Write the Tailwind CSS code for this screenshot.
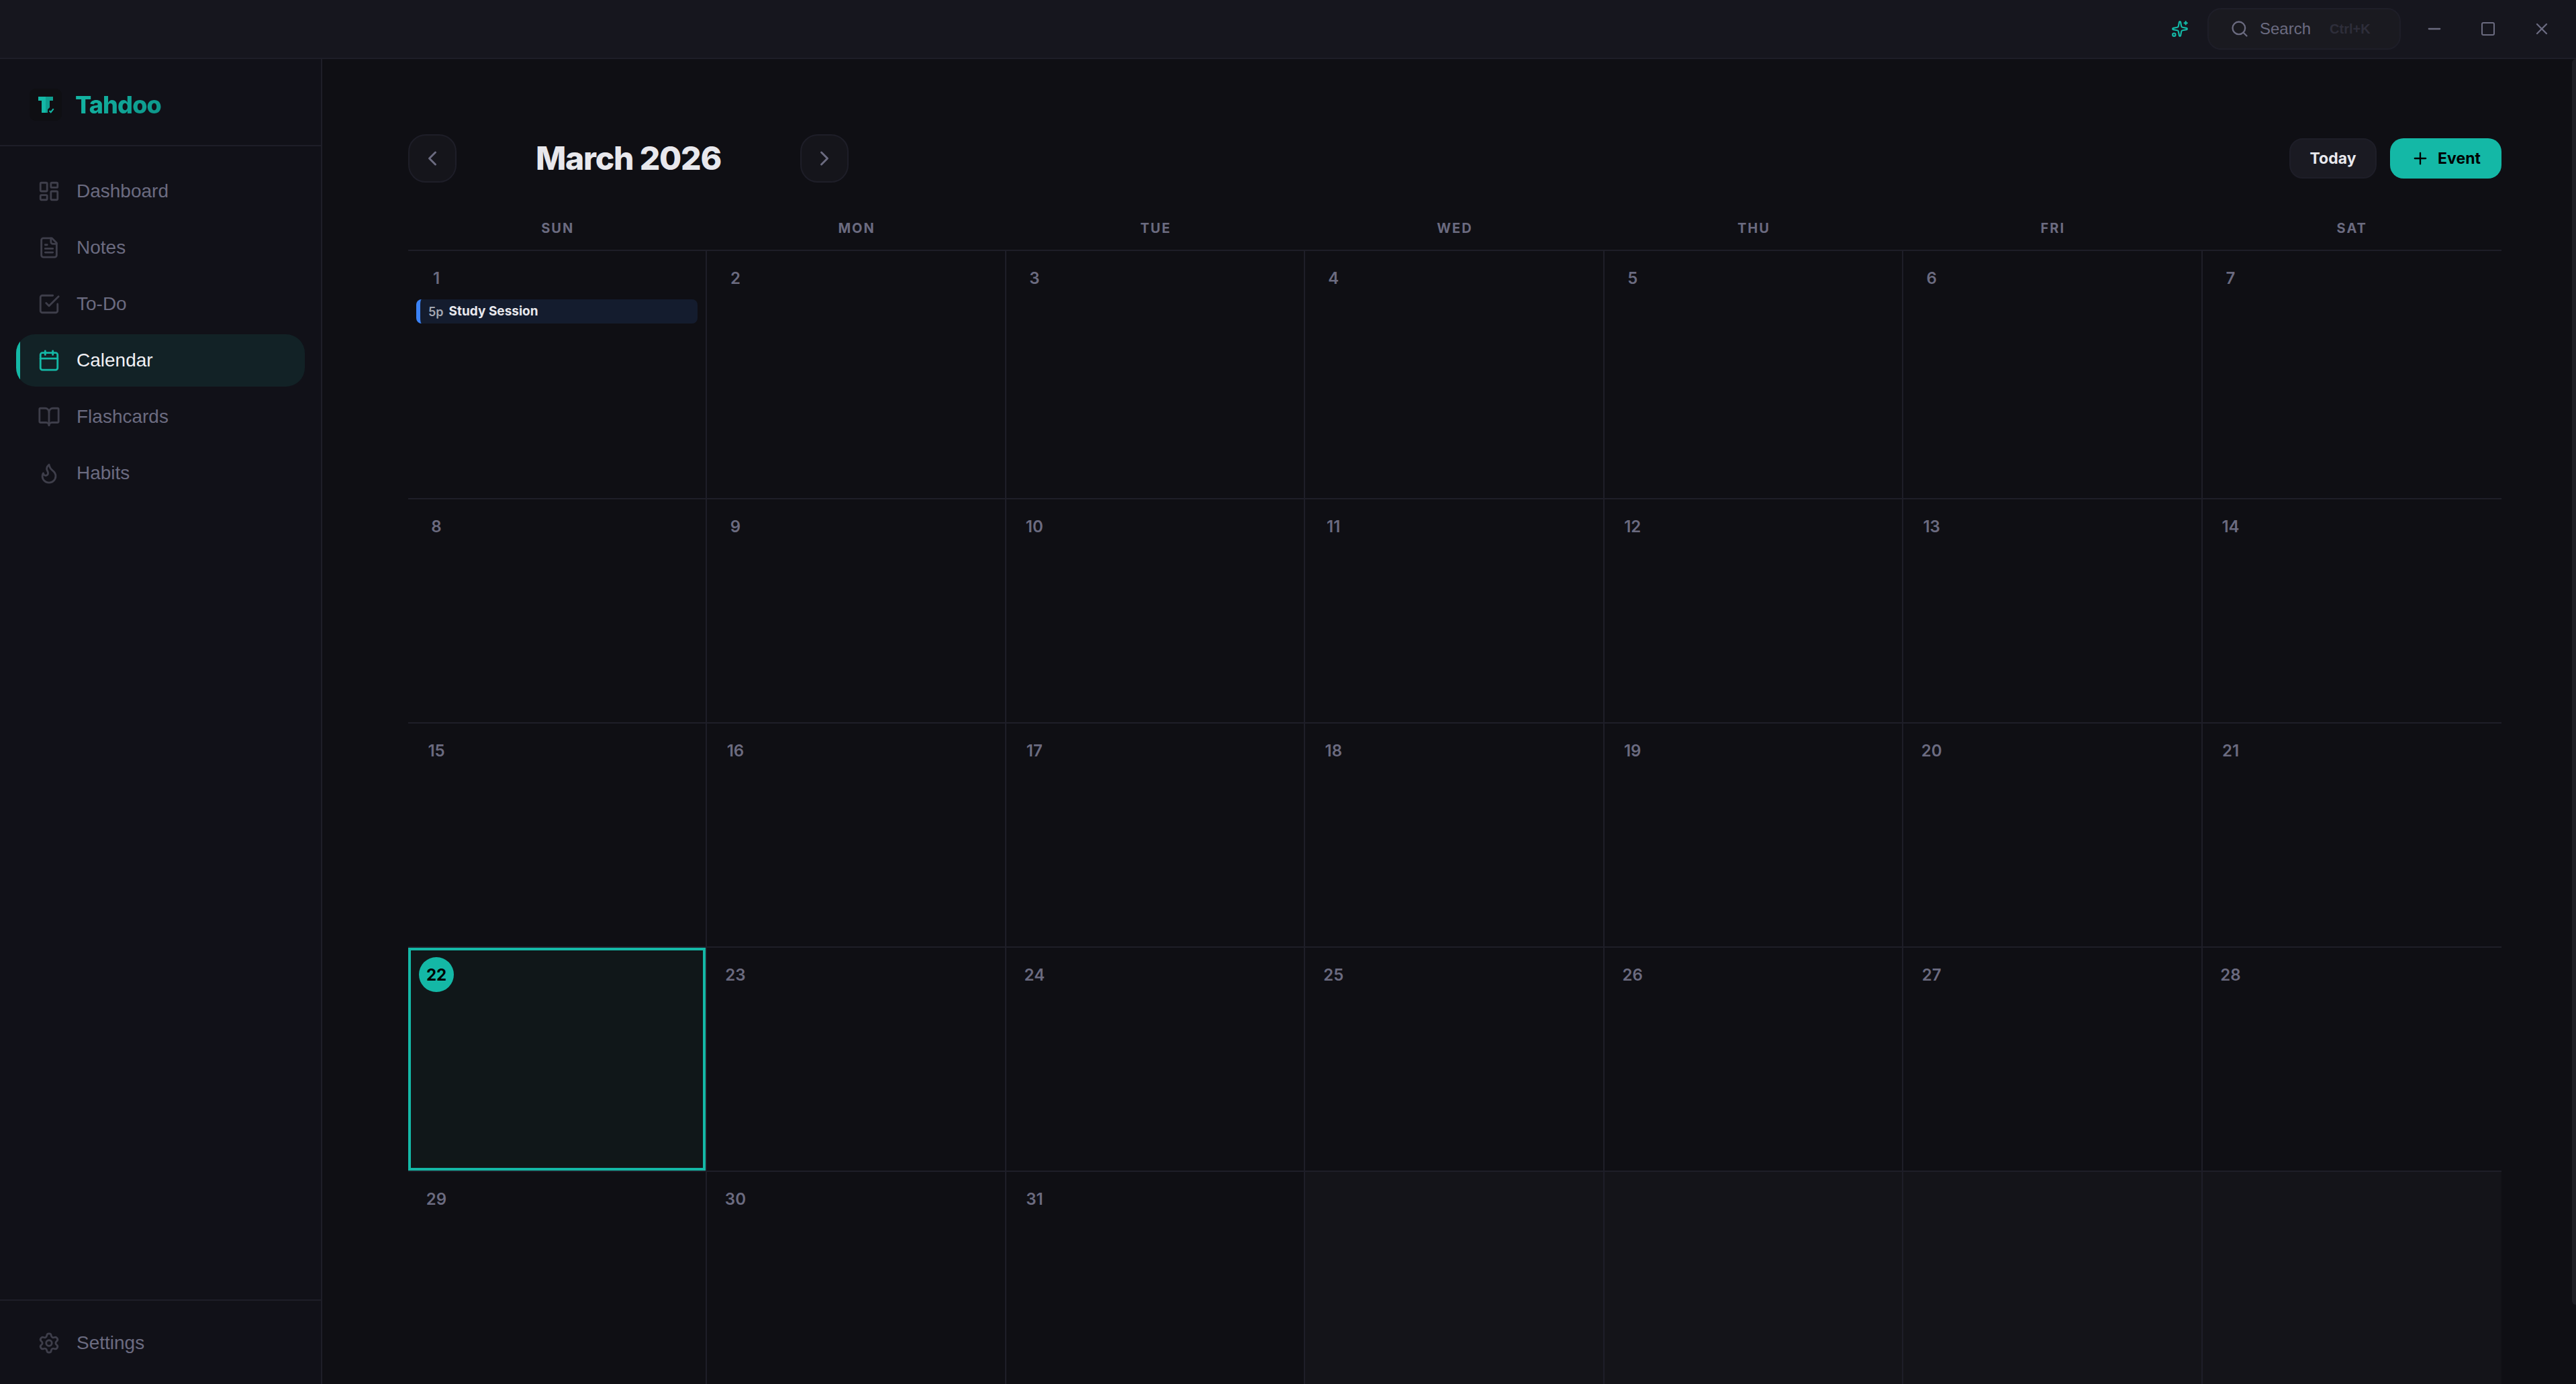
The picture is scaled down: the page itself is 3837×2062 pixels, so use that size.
<!DOCTYPE html>
<html lang="en">
<head>
<meta charset="utf-8">
<title>Tahdoo</title>
<script src="https://cdn.jsdelivr.net/npm/@tailwindcss/browser@4"></script>
</head>
<body class="flex h-screen flex-col overflow-hidden bg-[#0f0f14] font-['Inter',sans-serif] text-[#e8e8ed]">
<svg class="hidden">
  <defs>
    <symbol id="i-dashboard" viewBox="0 0 24 24"><rect x="3" y="3" width="7" height="9" rx="1"/><rect x="14" y="3" width="7" height="5" rx="1"/><rect x="14" y="12" width="7" height="9" rx="1"/><rect x="3" y="16" width="7" height="5" rx="1"/></symbol>
    <symbol id="i-notes" viewBox="0 0 24 24"><path d="M15 2H6a2 2 0 0 0-2 2v16a2 2 0 0 0 2 2h12a2 2 0 0 0 2-2V7Z"/><path d="M14 2v4a2 2 0 0 0 2 2h4"/><path d="M10 9H8"/><path d="M16 13H8"/><path d="M16 17H8"/></symbol>
    <symbol id="i-todo" viewBox="0 0 24 24"><path d="m9 11 3 3L22 4"/><path d="M21 12v7a2 2 0 0 1-2 2H5a2 2 0 0 1-2-2V5a2 2 0 0 1 2-2h11"/></symbol>
    <symbol id="i-calendar" viewBox="0 0 24 24"><path d="M8 2v4"/><path d="M16 2v4"/><rect width="18" height="18" x="3" y="4" rx="2"/><path d="M3 10h18"/></symbol>
    <symbol id="i-book" viewBox="0 0 24 24"><path d="M12 7v14"/><path d="M3 18a1 1 0 0 1-1-1V4a1 1 0 0 1 1-1h5a4 4 0 0 1 4 4 4 4 0 0 1 4-4h5a1 1 0 0 1 1 1v13a1 1 0 0 1-1 1h-6a3 3 0 0 0-3 3 3 3 0 0 0-3-3z"/></symbol>
    <symbol id="i-flame" viewBox="0 0 24 24"><path d="M8.500 14.500A2.500 2.500 0 0 0 11 12c0-1.380-.5-2-1-3-1.072-2.143-.224-4.054 2-6 .5 2.500 2 4.900 4 6.500 2 1.600 3 3.500 3 5.500a7 7 0 1 1-14 0c0-1.153.433-2.294 1-3a2.500 2.500 0 0 0 2.500 2.500z"/></symbol>
    <symbol id="i-settings" viewBox="0 0 24 24"><path d="M9.671 4.136a2.340 2.340 0 0 1 4.659 0 2.340 2.340 0 0 0 3.319 1.915 2.340 2.340 0 0 1 2.330 4.033 2.340 2.340 0 0 0 0 3.831 2.340 2.340 0 0 1-2.330 4.033 2.340 2.340 0 0 0-3.319 1.915 2.340 2.340 0 0 1-4.659 0 2.340 2.340 0 0 0-3.320-1.915 2.340 2.340 0 0 1-2.330-4.033 2.340 2.340 0 0 0 0-3.831A2.340 2.340 0 0 1 6.350 6.051a2.340 2.340 0 0 0 3.319-1.915"/><circle cx="12" cy="12" r="3"/></symbol>
    <symbol id="i-sparkles" viewBox="0 0 24 24"><path d="M11.017 2.814a1 1 0 0 1 1.966 0l1.051 5.558a2 2 0 0 0 1.594 1.594l5.558 1.051a1 1 0 0 1 0 1.966l-5.558 1.051a2 2 0 0 0-1.594 1.594l-1.051 5.558a1 1 0 0 1-1.966 0l-1.051-5.558a2 2 0 0 0-1.594-1.594l-5.558-1.051a1 1 0 0 1 0-1.966l5.558-1.051a2 2 0 0 0 1.594-1.594z"/><path d="M20 2v4"/><path d="M22 4h-4"/><circle cx="4" cy="20" r="2"/></symbol>
    <symbol id="i-search" viewBox="0 0 24 24"><circle cx="11" cy="11" r="8"/><path d="m21 21-4.300-4.300"/></symbol>
    <symbol id="i-minus" viewBox="0 0 24 24"><path d="M5 12h14"/></symbol>
    <symbol id="i-square" viewBox="0 0 24 24"><rect width="18" height="18" x="3" y="3" rx="2"/></symbol>
    <symbol id="i-x" viewBox="0 0 24 24"><path d="M18 6 6 18"/><path d="m6 6 12 12"/></symbol>
    <symbol id="i-left" viewBox="0 0 24 24"><path d="m15 18-6-6 6-6"/></symbol>
    <symbol id="i-right" viewBox="0 0 24 24"><path d="m9 18 6-6-6-6"/></symbol>
    <symbol id="i-plus" viewBox="0 0 24 24"><path d="M5 12h14"/><path d="M12 5v14"/></symbol>
  </defs>
</svg>

<header class="flex h-[88px] shrink-0 items-center justify-end border-b-2 border-[#1e1e28] bg-[#16161e] pr-[11px] font-['Liberation_Sans',sans-serif] text-[#6b6b80]">
  <button aria-label="Assistant" class="mr-7 text-[#14b8a6]"><svg class="size-[26px] fill-none stroke-current stroke-2 [stroke-linecap:round] [stroke-linejoin:round]"><use href="#i-sparkles"/></svg></button>
  <button class="mr-2.5 flex h-[62px] w-[288px] items-center gap-4 rounded-[20px] border-2 border-[#1e1e28] bg-[#1a1a20] pl-8 text-[24px]">
    <svg class="size-[28px] fill-none stroke-current stroke-2 [stroke-linecap:round] [stroke-linejoin:round]"><use href="#i-search"/></svg>
    <span>Search</span>
    <kbd class="ml-3 font-['Liberation_Sans',sans-serif] text-[20px] font-bold text-[#2e2e3a]">Ctrl+K</kbd>
  </button>
  <button aria-label="Minimize" class="flex h-[86px] w-20 items-center justify-center"><svg class="size-[28px] fill-none stroke-current stroke-2 [stroke-linecap:round] [stroke-linejoin:round]"><use href="#i-minus"/></svg></button>
  <button aria-label="Maximize" class="flex h-[86px] w-20 items-center justify-center"><svg class="size-[24px] fill-none stroke-current stroke-2 [stroke-linecap:round] [stroke-linejoin:round]"><use href="#i-square"/></svg></button>
  <button aria-label="Close" class="flex h-[86px] w-20 items-center justify-center"><svg class="size-[28px] fill-none stroke-current stroke-2 [stroke-linecap:round] [stroke-linejoin:round]"><use href="#i-x"/></svg></button>
</header>

<div class="flex min-h-0 flex-1">
  <aside class="flex w-[480px] shrink-0 flex-col border-r-2 border-[#1e1e28] bg-[#111118]">
    <div class="flex items-center gap-5 border-b-2 border-[#1e1e28] pt-11 pb-9 pl-11">
      <svg class="size-12 shrink-0" viewBox="0 0 48 48">
        <defs><linearGradient id="tg" x1="0" x2="1"><stop offset="0.500" stop-color="#14b8a6"/><stop offset="0.500" stop-color="#0f9f90"/></linearGradient></defs>
        <rect width="48" height="48" rx="9" fill="#0f0f13"/>
        <path d="M13 12H35V18H30V28L27 31V36H18V18H13Z" fill="url(#tg)"/>
        <path d="M29.500 33l2.200 2.200 4-5" fill="none" stroke="#14b8a6" stroke-width="2"/>
      </svg>
      <span class="bg-linear-135 from-[#14b8a6] to-[#0d9488] bg-clip-text text-[36px] leading-[48px] font-extrabold tracking-tight text-transparent">Tahdoo</span>
    </div>
    <nav class="flex flex-1 flex-col gap-1.5 px-6 pt-7 font-['Liberation_Sans',sans-serif] text-[28px] text-[#6b6b80]">
      <a href="#" class="flex h-[78px] items-center gap-6 rounded-[28px] pl-8"><svg class="size-[34px] fill-none stroke-[#3e3e4a] stroke-2 [stroke-linecap:round] [stroke-linejoin:round]"><use href="#i-dashboard"/></svg>Dashboard</a>
      <a href="#" class="flex h-[78px] items-center gap-6 rounded-[28px] pl-8"><svg class="size-[34px] fill-none stroke-[#3e3e4a] stroke-2 [stroke-linecap:round] [stroke-linejoin:round]"><use href="#i-notes"/></svg>Notes</a>
      <a href="#" class="flex h-[78px] items-center gap-6 rounded-[28px] pl-8"><svg class="size-[34px] fill-none stroke-[#3e3e4a] stroke-2 [stroke-linecap:round] [stroke-linejoin:round]"><use href="#i-todo"/></svg>To-Do</a>
      <a href="#" aria-current="page" class="relative flex h-[78px] items-center gap-6 overflow-hidden rounded-[28px] bg-[#122226] pl-8 text-[#f0f0f4]"><span class="absolute inset-y-0 left-0 w-1.5 bg-[#14b8a6]"></span><svg class="size-[34px] fill-none stroke-[#14b8a6] stroke-2 [stroke-linecap:round] [stroke-linejoin:round]"><use href="#i-calendar"/></svg>Calendar</a>
      <a href="#" class="flex h-[78px] items-center gap-6 rounded-[28px] pl-8"><svg class="size-[34px] fill-none stroke-[#3e3e4a] stroke-2 [stroke-linecap:round] [stroke-linejoin:round]"><use href="#i-book"/></svg>Flashcards</a>
      <a href="#" class="flex h-[78px] items-center gap-6 rounded-[28px] pl-8"><svg class="size-[34px] fill-none stroke-[#3e3e4a] stroke-2 [stroke-linecap:round] [stroke-linejoin:round]"><use href="#i-flame"/></svg>Habits</a>
    </nav>
    <div class="border-t-2 border-[#1e1e28] px-6 pt-6 pb-[22px] font-['Liberation_Sans',sans-serif] text-[28px] text-[#6b6b80]">
      <a href="#" class="flex h-[78px] items-center gap-6 rounded-[28px] pl-8"><svg class="size-[34px] fill-none stroke-[#3e3e4a] stroke-2 [stroke-linecap:round] [stroke-linejoin:round]"><use href="#i-settings"/></svg>Settings</a>
    </div>
  </aside>

  <main class="relative min-w-0 flex-1 overflow-hidden pt-28 pr-[111px] pl-32">
    <div class="absolute top-0 right-0 h-[1856px] w-1.5 rounded-l-[6px] bg-[#1e1e24]"></div>
    <div class="flex items-center justify-between">
      <div class="flex items-center gap-6">
        <button aria-label="Previous month" class="flex size-[72px] items-center justify-center rounded-[26px] border-2 border-[#1e1e28] bg-[#15151b] text-[#6b6b80]"><svg class="size-9 fill-none stroke-current stroke-2 [stroke-linecap:round] [stroke-linejoin:round]"><use href="#i-left"/></svg></button>
        <h1 class="w-[464px] text-center text-[48px] leading-[60px] font-extrabold tracking-tight">March 2026</h1>
        <button aria-label="Next month" class="flex size-[72px] items-center justify-center rounded-[26px] border-2 border-[#1e1e28] bg-[#15151b] text-[#6b6b80]"><svg class="size-9 fill-none stroke-current stroke-2 [stroke-linecap:round] [stroke-linejoin:round]"><use href="#i-right"/></svg></button>
      </div>
      <div class="flex items-center gap-5 text-[23px] font-bold">
        <button class="h-[60px] w-[130px] rounded-[20px] border-2 border-[#1e1e28] bg-[#1a1a22]">Today</button>
        <button class="flex h-[60px] w-[166px] items-center justify-center gap-3 rounded-[20px] bg-[#14b8a6] text-black"><svg class="size-7 fill-none stroke-current stroke-2 [stroke-linecap:round] [stroke-linejoin:round]"><use href="#i-plus"/></svg>Event</button>
      </div>
    </div>

    <table class="mt-9 w-full table-fixed border-separate border-spacing-0">
      <thead>
        <tr class="h-[66px] text-[20px] leading-6 tracking-[2px] text-[#6b6b80] *:border-b-2 *:border-[#1e1e28] *:p-0 *:font-bold">
          <th>SUN</th><th>MON</th><th>TUE</th><th>WED</th><th>THU</th><th>FRI</th><th>SAT</th>
        </tr>
      </thead>
      <tbody id="weeks" class="text-[24px] font-semibold text-[#6b6b80]"></tbody>
    </table>
  </main>
</div>
<script>
  const TODAY = 22, DAYS = 31;
  const events = { 1: [{ time: '5p', title: 'Study Session' }] };
  const body = document.getElementById('weeks');
  for (let w = 0; w < 5; w++) {
    const tr = document.createElement('tr');
    tr.className = w === 0 ? 'h-[370px]' : 'h-[334px]';
    for (let d = 1; d <= 7; d++) {
      const n = w * 7 + d;
      const td = document.createElement('td');
      td.className = 'border-b-2 border-[#1e1e28] px-3 pt-3.5 pb-0 align-top' + (d < 7 ? ' border-r-2' : '')
        + (n > DAYS ? ' bg-[#141419]' : n === TODAY ? ' bg-[#101719] inset-ring-4 inset-ring-[#14b8a6]' : '');
      if (n <= DAYS) {
        td.innerHTML = `<div class="ml-1 flex size-[52px] items-center justify-center rounded-full pt-0.5 ${n === TODAY ? 'bg-[#14b8a6] font-bold text-black' : ''}">${n}</div>`
          + (events[n] || []).map(e => `<button class="mt-1.5 flex h-9 w-full items-center gap-2 rounded-[8px] border-l-6 border-[#3b82f6] bg-[#141c2e] pl-3 text-[19px] font-bold text-[#e8e8ed]"><span class="text-[18px] font-semibold text-[#a3a7b2]">${e.time}</span>${e.title}</button>`).join('');
      }
      tr.append(td);
    }
    body.append(tr);
  }
</script>
</body>
</html>
